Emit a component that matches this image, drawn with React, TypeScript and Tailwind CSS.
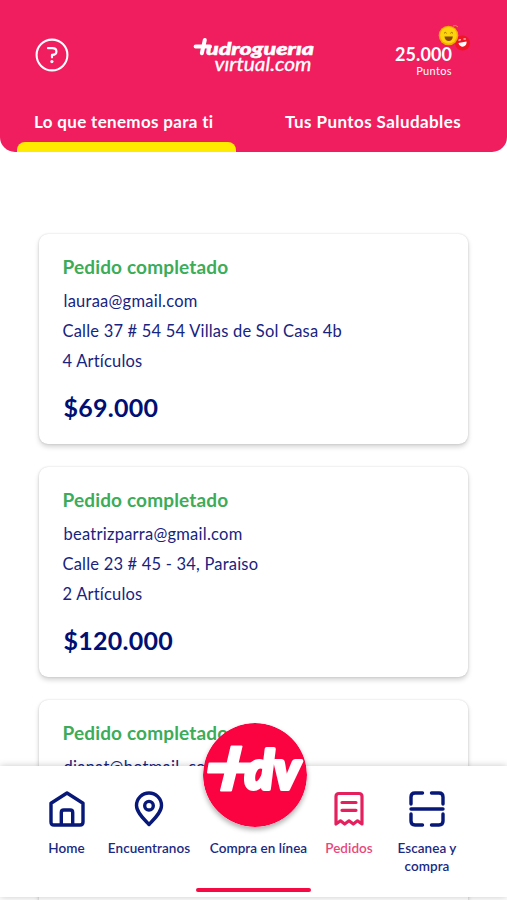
import type { ReactNode } from 'react';

interface Order {
  email: string;
  address: string;
  items: string;
  total: string;
}

const orders: Order[] = [
  {
    email: 'lauraa@gmail.com',
    address: 'Calle 37 # 54 54 Villas de Sol Casa 4b',
    items: '4 Artículos',
    total: '$69.000',
  },
  {
    email: 'beatrizparra@gmail.com',
    address: 'Calle 23 # 45 - 34, Paraiso',
    items: '2 Artículos',
    total: '$120.000',
  },
  {
    email: 'dianat@hotmail. com',
    address: '',
    items: '',
    total: '',
  },
];

function BrandLogo() {
  return (
    <svg width="124" height="40" viewBox="0 0 124 40" fill="#fff" className="block">
      <path
        d="M2.6 10.5H17M11.8 4L8.8 17.3"
        stroke="#fff"
        strokeWidth="4"
        strokeLinecap="round"
      />
      <text
        x="13"
        y="18.5"
        fontSize="16.5"
        textLength="108"
        lengthAdjust="spacingAndGlyphs"
        stroke="#fff"
        strokeWidth="0.5"
        className="font-['Lato',sans-serif] font-black italic"
      >
        udroguerıa
      </text>
      <text
        x="21.5"
        y="35.2"
        fontSize="18.5"
        textLength="97"
        lengthAdjust="spacingAndGlyphs"
        stroke="#fff"
        strokeWidth="0.3"
        className="font-['Lato',sans-serif] italic"
      >
        vırtual.com
      </text>
    </svg>
  );
}

function HelpIcon() {
  return (
    <svg width="34" height="34" viewBox="0 0 34 34" fill="none" stroke="#fff" className="block">
      <circle cx="17" cy="17" r="15.4" strokeWidth="2.1" />
      <path d="M13 10.2H17.3C22.8 10.2 22.8 16.9 17.3 16.9H17V19.3" strokeWidth="2.2" strokeLinecap="round" strokeLinejoin="round" />
      <circle cx="16.9" cy="23.6" r="1.6" fill="#fff" stroke="none" />
    </svg>
  );
}

function PointsFaces() {
  return (
    <svg width="34" height="28" viewBox="0 0 34 28" className="block">
      <circle cx="24.5" cy="19" r="7.6" fill="#ee1525" />
      <circle cx="10.5" cy="11.5" r="9.8" fill="#f5a800" />
      <circle cx="10.5" cy="11.3" r="8.4" fill="#fbd40b" />
      <path d="M6.5 12.5H14.8C14.6 18.6 6.9 18.6 6.5 12.5Z" fill="#8a4a06" />
      <path d="M6 9.3Q7.3 7.5 8.6 9.3M12.4 9.3Q13.7 7.5 15 9.3" stroke="#a86a08" strokeWidth="1" fill="none" />
      <path d="M20.4 19L28.5 17.6C29.3 23 22.2 25 20.4 19Z" fill="#fff" />
      <path d="M20.5 16.2L22.8 15.6M25.5 15L27.8 15" stroke="#fff" strokeWidth="1.1" />
      <path d="M15 2Q18 .6 20 3" stroke="#d99a1c" strokeWidth="1" fill="none" />
    </svg>
  );
}

function Header() {
  return (
    <header className="h-[152px] overflow-hidden rounded-b-[15px] bg-[#f01d5f] text-white">
      <div className="flex h-[103px] pr-[37px] pl-[35px]">
        <div className="w-[158px] pt-[38px]">
          <HelpIcon />
        </div>
        <div className="pt-[36px]">
          <BrandLogo />
        </div>
        <div className="relative ml-auto w-[76px] pt-[42.5px]">
          <p className="w-[58px] text-right text-[18px]/[22px] font-bold tracking-[0.1px] whitespace-nowrap">25.000</p>
          <p className="w-[58px] text-right text-[11px]/[12px] tracking-[0.35px]">Puntos</p>
          <div className="absolute top-[23.5px] left-[44px]">
            <PointsFaces />
          </div>
        </div>
      </div>
      <div className="flex h-[49px] text-[17px]/[37px] font-bold tracking-[0.33px] whitespace-nowrap">
        <div className="ml-[17px] flex w-[219px] flex-col justify-between pl-[17px]">
          <span>Lo que tenemos para ti</span>
          <div className="-ml-[17px] h-[10px] rounded-t-[8px] bg-[#ffeb00]" />
        </div>
        <span className="ml-[49px] tracking-[0.42px]">Tus Puntos Saludables</span>
      </div>
    </header>
  );
}

function OrderCard({ order }: { order: Order }) {
  return (
    <article className="h-[210.5px] rounded-[9px] bg-white px-[23.5px] pt-[19.5px] whitespace-nowrap text-[#17247f] shadow-[0_3px_5px_rgba(0,0,0,0.17),0_0_2px_rgba(0,0,0,0.16)]">
      <h2 className="mb-[6px] text-[19px]/[27px] font-bold tracking-[0.15px] text-[#3cac59]">Pedido completado</h2>
      <p className="pl-px text-[16.5px]/[30px] tracking-[0.25px]">{order.email}</p>
      <p className="text-[16.5px]/[30px] tracking-[0.2px]">{order.address}</p>
      <p className="text-[16.5px]/[30px] tracking-[0.2px]">{order.items}</p>
      <p className="mt-[12.5px] pl-px text-[25px]/[36px] font-bold tracking-[0.25px] text-[#000f74]">{order.total}</p>
    </article>
  );
}

function HomeIcon() {
  return (
    <svg width="36" height="36" viewBox="0 0 36 36" fill="none" stroke="#071878" strokeWidth="3.4" strokeLinejoin="round">
      <path d="M2 12.3L18 2L34 12.3V31Q34 34 31 34H5Q2 34 2 31Z" />
      <path d="M12.3 34V21.5Q12.3 19 14.8 19H21.2Q23.7 19 23.7 21.5V34" />
    </svg>
  );
}

function PinIcon() {
  return (
    <svg width="30" height="36" viewBox="0 0 30 36" fill="none" stroke="#071878" strokeWidth="3.4" strokeLinejoin="round">
      <path d="M15 33.5C10 28 2.5 21.5 2.5 14.5A12.5 12.5 0 0 1 27.5 14.5C27.5 21.5 20 28 15 33.5Z" />
      <circle cx="15" cy="14.7" r="4.3" />
    </svg>
  );
}

function ReceiptIcon() {
  return (
    <svg width="30" height="36" viewBox="0 0 30 36" fill="none" stroke="#e5205f" strokeWidth="3.2" strokeLinejoin="round" strokeLinecap="round">
      <path d="M2 33V5.5Q2 2.5 5 2.5H25Q28 2.5 28 5.5V33L23.5 29.8L19.3 33L15 29.8L10.7 33L6.5 29.8Z" />
      <path d="M8 11.5H22M8 19.3H22" />
    </svg>
  );
}

function ScanIcon() {
  return (
    <svg width="36" height="36" viewBox="0 0 36 36" fill="none" stroke="#071878" strokeWidth="3.4" strokeLinecap="round">
      <path d="M2 13V6Q2 2 6 2H13.5M22.5 2H30Q34 2 34 6V13M2 23V30Q2 34 6 34H13.5M22.5 34H30Q34 34 34 30V23M2 18H34" />
    </svg>
  );
}

function StoreBadge() {
  return (
    <svg width="104" height="104" viewBox="0 0 104 104" className="block rounded-full shadow-[0_3px_5px_rgba(0,0,0,0.3)]">
      <circle cx="52" cy="52" r="52" fill="#fb0340" />
      <path
        d="M6.5 40.5H24.5L28.5 23.5H38.5L34.5 40.5H49L47 49.5H32.5L28 67.5H18L22.5 49.5H5Z"
        fill="#fff"
        stroke="#fff"
        strokeWidth="2"
        strokeLinejoin="round"
      />
      <text
        x="42"
        y="66"
        fontSize="54"
        textLength="55"
        lengthAdjust="spacingAndGlyphs"
        fill="#fff"
        stroke="#fff"
        strokeWidth="4"
        strokeLinejoin="round"
        className="font-['Lato',sans-serif] font-black italic"
      >
        dv
      </text>
    </svg>
  );
}

function NavItem({ icon, label, className }: { icon: ReactNode; label: ReactNode; className: string }) {
  return (
    <div className={`flex flex-col items-center ${className}`}>
      <div className="h-[36px]">{icon}</div>
      <span className="mt-[12px] text-center text-[13.5px]/[18px] font-semibold tracking-[0.05px] whitespace-nowrap">{label}</span>
    </div>
  );
}

function BottomNav() {
  return (
    <nav className="absolute bottom-[3px] left-0 flex h-[131px] w-full flex-col items-center justify-between bg-white pt-[25px] pb-[5px] text-[#1b2983] shadow-[0_0_7px_rgba(0,0,0,0.22)]">
      <div className="flex w-full pl-[36px]">
        <NavItem className="w-[61px]" icon={<HomeIcon />} label="Home" />
        <NavItem className="w-[104px]" icon={<PinIcon />} label="Encuentranos" />
        <NavItem className="w-[115px]" icon={null} label="Compra en línea" />
        <NavItem className="w-[66px] text-[#e9477b]" icon={<ReceiptIcon />} label="Pedidos" />
        <NavItem
          className="w-[90px]"
          icon={<ScanIcon />}
          label={
            <>
              Escanea y<br />
              compra
            </>
          }
        />
      </div>
      <div className="h-[4px] w-[115px] rounded-full bg-[#f50a43]" />
      <div className="absolute -top-[43.5px] left-[203px]">
        <StoreBadge />
      </div>
    </nav>
  );
}

export default function App() {
  return (
    <div className="relative h-[900px] w-[507px] overflow-hidden bg-white font-['Lato',sans-serif]">
      <Header />
      <main className="flex flex-col gap-[22.5px] px-[39px] pt-[81.5px]">
        {orders.map((order) => (
          <OrderCard key={order.email} order={order} />
        ))}
      </main>
      <BottomNav />
    </div>
  );
}
